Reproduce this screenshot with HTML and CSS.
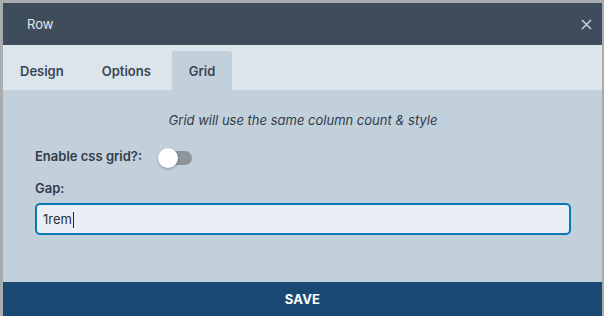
FILE: index.html
```html
<!DOCTYPE html>
<html lang="en">
<head>
    <meta charset="UTF-8">
    <title>Row</title>
    <link rel="stylesheet" href="styles.css">
</head>
<body>
    <div class="modal">
        <div class="modal-header">
            <span class="modal-title">Row</span>
            <button class="close" aria-label="Close">
                <svg width="11" height="11" viewBox="0 0 11 11">
                    <path d="M1 1 L10 10 M10 1 L1 10" stroke="#c9d1d9" stroke-width="1.5" fill="none"/>
                </svg>
            </button>
        </div>

        <div class="tabs">
            <div class="tab">Design</div>
            <div class="tab">Options</div>
            <div class="tab active">Grid</div>
        </div>

        <div class="content">
            <p class="note">Grid will use the same column count &amp; style</p>

            <div class="field-row">
                <label>Enable css grid?:</label>
                <span class="toggle"><span class="knob"></span></span>
            </div>

            <label class="field-label">Gap:</label>
            <div class="text-input">1rem<span class="caret"></span></div>
        </div>

        <div class="save">SAVE</div>
    </div>
</body>
</html>
```

FILE: styles.css
```css
body {
    margin: 0;
    padding: 3px 2px 0 3px;
    background: #a9acaf;
    font-family: Inter, "Noto Sans", sans-serif;
    font-size: 13px;
    color: #343e4a;
}
.modal {
    height: 313px;
    display: flex;
    flex-direction: column;
}
.modal-header {
    height: 42px;
    background: #3f4c5c;
    display: flex;
    align-items: center;
    justify-content: space-between;
    padding: 0 10px 0 24px;
}
.modal-title {
    color: #e3e8ed;
    font-size: 13px;
}
.close {
    background: none;
    border: none;
    padding: 0;
    width: 12px;
    height: 12px;
    display: flex;
    align-items: center;
    justify-content: center;
}
.tabs {
    height: 45px;
    background: #dce4ec;
    display: flex;
    align-items: flex-end;
    gap: 4px;
}
.tab {
    height: 39px;
    padding: 0 17px;
    display: flex;
    align-items: center;
    font-weight: 600;
    color: #3a4553;
    border-radius: 3px 3px 0 0;
}
.tab.active {
    background: #c2d0dc;
}
.content {
    flex: 1;
    background: #c2d0dc;
    padding: 20px 31px 0 32px;
}
.note {
    margin: 0;
    line-height: 20px;
    text-align: center;
    font-style: italic;
    color: #323c48;
}
.field-row {
    margin-top: 14px;
    height: 24px;
    display: flex;
    align-items: center;
}
.field-row label,
.field-label {
    font-weight: 600;
    color: #323c48;
}
.toggle {
    position: relative;
    margin-left: 16px;
    width: 34px;
    height: 20px;
    margin-top: 4px;
}
.toggle::before {
    content: "";
    position: absolute;
    left: 4px;
    right: 0;
    top: 3px;
    height: 14px;
    border-radius: 7px;
    background: #8c949c;
}
.knob {
    position: absolute;
    left: 0;
    top: 0;
    width: 20px;
    height: 20px;
    border-radius: 50%;
    background: #fff;
    box-shadow: 0 1px 3px rgba(0, 0, 0, 0.3);
}
.field-label {
    display: block;
    margin-top: 10px;
    line-height: 20px;
}
.text-input {
    margin-top: 5px;
    height: 28px;
    line-height: 28px;
    padding: 0 6px;
    border: 2px solid #0b78b5;
    border-radius: 5px;
    background: #e9eff4;
    color: #2a2f35;
    font-size: 13px;
}
.caret {
    display: inline-block;
    width: 1px;
    height: 16px;
    background: #222;
    vertical-align: middle;
    margin-left: 1px;
}
.save {
    height: 34px;
    background: #1a4a73;
    color: #fff;
    font-weight: 700;
    font-size: 13px;
    display: flex;
    align-items: center;
    justify-content: center;
    letter-spacing: 0.2px;
}
```
